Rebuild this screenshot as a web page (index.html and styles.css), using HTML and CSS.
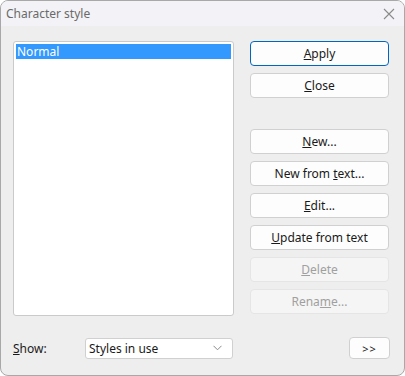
FILE: index.html
```html
<!DOCTYPE html>
<html>
<head>
<meta charset="utf-8">
<link rel="stylesheet" href="styles.css">
</head>
<body>
<div class="window">
  <div class="titlebar">
    <span class="title">Character style</span>
    <svg class="close-x" width="12" height="12" viewBox="0 0 12 12"><path d="M1 1 L11 11 M11 1 L1 11" stroke="#8a8a8a" stroke-width="1.1" fill="none"/></svg>
  </div>
  <div class="content">
    <div class="main">
      <div class="listbox">
        <div class="item selected">Normal</div>
      </div>
      <div class="buttons">
        <div class="btn default"><span><u>A</u>pply</span></div>
        <div class="btn"><span><u>C</u>lose</span></div>
        <div class="btn spaced"><span><u>N</u>ew...</span></div>
        <div class="btn"><span>New from <u>t</u>ext...</span></div>
        <div class="btn"><span><u>E</u>dit...</span></div>
        <div class="btn"><span><u>U</u>pdate from text</span></div>
        <div class="btn disabled"><span><u>D</u>elete</span></div>
        <div class="btn disabled"><span>Rena<u>m</u>e...</span></div>
      </div>
    </div>
    <div class="bottom">
      <span class="label"><u>S</u>how:</span>
      <div class="select">
        <span>Styles in use</span>
        <svg width="9" height="6" viewBox="0 0 9 6"><path d="M0.5 0.8 L4.5 4.8 L8.5 0.8" stroke="#8a8a8a" stroke-width="1" fill="none"/></svg>
      </div>
      <div class="spacer"></div>
      <div class="btn more"><span>&gt;&gt;</span></div>
    </div>
  </div>
</div>
</body>
</html>
```
FILE: styles.css
```css
html, body {
  margin: 0;
  padding: 0;
  background: #ffffff;
}
body {
  font-family: "Segoe UI", "Noto Sans", "Open Sans", sans-serif;
  font-size: 12px;
  color: #1a1a1a;
}
.window {
  box-sizing: border-box;
  width: 405px;
  height: 376px;
  border: 1px solid #a8a8a8;
  border-radius: 8px;
  background: #eeeeee;
  overflow: hidden;
  display: flex;
  flex-direction: column;
}
.titlebar {
  height: 25px;
  background: #f3f3f7;
  display: flex;
  align-items: center;
  padding: 0 9px 0 5px;
}
.title {
  flex: 1;
  color: #6a6a6a;
  font-size: 12px;
}
.close-x {
  display: block;
}
.content {
  padding: 15px 14px 0 12px;
  display: flex;
  flex-direction: column;
}
.main {
  display: flex;
  height: 275px;
}
.listbox {
  box-sizing: border-box;
  width: 221px;
  height: 275px;
  background: #fff;
  border: 1px solid #cacaca;
  border-radius: 3px;
  padding: 2px;
}
.item {
  height: 15px;
  line-height: 15px;
  padding-left: 1px;
}
.item.selected {
  background: #3399ff;
  color: #fff;
}
.buttons {
  margin-left: 16px;
  width: 139px;
  display: flex;
  flex-direction: column;
  gap: 7px;
}
.btn {
  box-sizing: border-box;
  height: 25px;
  background: #fdfdfd;
  border: 1px solid #d0d0d0;
  border-radius: 4px;
  display: flex;
  align-items: center;
  justify-content: center;
  color: #1a1a1a;
}
.btn.default {
  border-color: #0067c0;
}
.btn.spaced {
  margin-top: 24px;
}
.btn.disabled {
  background: #f5f5f5;
  border-color: #e5e5e5;
  color: #a0a0a0;
}
.bottom {
  margin-top: 21px;
  display: flex;
  align-items: center;
  height: 22px;
}
.label {
  width: 72px;
}
.select {
  box-sizing: border-box;
  width: 148px;
  height: 21px;
  background: #fff;
  border: 1px solid #d0d0d0;
  border-radius: 3px;
  display: flex;
  align-items: center;
  justify-content: space-between;
  padding: 0 10px 0 3px;
}
.select svg {
  display: block;
}
.spacer {
  flex: 1;
}
.btn.more {
  width: 41px;
  height: 22px;
  font-size: 11px;
  letter-spacing: 1px;
}
```
